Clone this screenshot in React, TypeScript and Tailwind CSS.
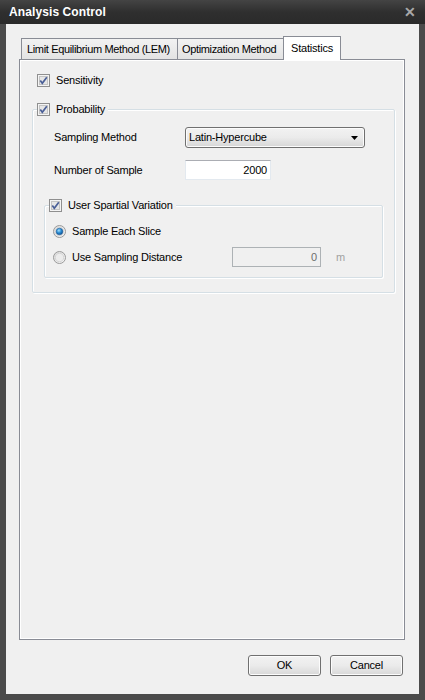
import React from "react";

const font = { fontFamily: '"Liberation Sans", Arial, sans-serif' };

function Check({ checked = true }: { checked?: boolean }) {
  return (
    <svg width="13" height="13" viewBox="0 0 13 13" className="shrink-0">
      <rect x="0.5" y="0.5" width="12" height="12" fill="#f4f4f4" stroke="#8f8f8f" />
      <rect x="2.5" y="2.5" width="8" height="8" fill="#e6e6e6" stroke="#c4c4c4" />
      {checked && (
        <path d="M3.3 6.4 L5.3 9.2 L9.8 3.2" fill="none" stroke="#4a5f97" strokeWidth="1.7" />
      )}
    </svg>
  );
}

function Radio({ checked }: { checked: boolean }) {
  return (
    <svg width="13" height="13" viewBox="0 0 13 13" className="shrink-0">
      <defs>
        <radialGradient id="rg" cx="0.4" cy="0.35" r="0.7">
          <stop offset="0" stopColor="#a6e0fb" />
          <stop offset="0.5" stopColor="#2a8dd4" />
          <stop offset="1" stopColor="#0d4a8a" />
        </radialGradient>
        <linearGradient id="rb" x1="0" y1="0" x2="1" y2="1">
          <stop offset="0" stopColor="#d8d8d8" />
          <stop offset="1" stopColor="#f8f8f8" />
        </linearGradient>
      </defs>
      <circle cx="6.5" cy="6.5" r="6" fill="url(#rb)" stroke="#9a9a9a" />
      <circle cx="6.5" cy="6.5" r="4.2" fill="#ececec" stroke="#cfcfcf" strokeWidth="0.8" />
      {checked && <circle cx="6.5" cy="6.5" r="3.3" fill="url(#rg)" stroke="#1c5c9b" strokeWidth="0.6" />}
    </svg>
  );
}

export default function App() {
  return (
    <div className="w-[425px] h-[700px] bg-[#4b4b4b] flex flex-col text-[11px] tracking-[-0.2px] text-black whitespace-nowrap" style={font}>
      {/* title bar */}
      <div className="h-[24px] shrink-0 bg-gradient-to-b from-[#444444] via-[#2f2f2f] to-[#2a2a2a] flex items-center justify-between pl-[9px] pr-[9px]">
        <span className="text-white font-bold text-[12px] tracking-[0.1px]">Analysis Control</span>
        <span className="text-[#a8a8a8] font-bold text-[14px] leading-none">✕</span>
      </div>
      {/* body */}
      <div className="flex-1 mx-[6px] mb-[6px] bg-[#f0f0f0] flex flex-col">
        {/* tabs */}
        <div className="flex items-end pl-[15px] pt-[12px] h-[35px] shrink-0">
          <div className="h-[21px] w-[157px] border border-b-0 border-[#898c95] bg-gradient-to-b from-[#f2f2f2] to-[#e3e3e3] flex items-center pl-[5px] tracking-[-0.35px]">
            Limit Equilibrium Method (LEM)
          </div>
          <div className="h-[21px] w-[106px] border border-b-0 border-l-0 border-[#898c95] bg-gradient-to-b from-[#f2f2f2] to-[#e3e3e3] flex items-center pl-[4px] tracking-[-0.35px]">
            Optimization Method
          </div>
          <div className="h-[24px] w-[58px] -ml-[1px] border border-b-0 border-[#898c95] bg-white flex items-start pt-[3px] pl-[7px] relative z-10 -mb-[1px]">
            Statistics
          </div>
        </div>
        {/* panel */}
        <div className="ml-[13px] w-[386px] h-[581px] border border-[#898c95] shadow-[inset_1px_1px_0_#ffffff,inset_-1px_-1px_0_#ffffff] pt-[14px] pl-[12px] pr-[9px]">
          <div className="flex items-center h-[13px] pl-[5px] gap-[6px]">
            <Check />
            <span>Sensitivity</span>
          </div>
          {/* probability group */}
          <div className="mt-[22px] h-[184px] border border-[#d5dfe5] rounded-[2px] shadow-[inset_1px_1px_0_#ffffff,1px_1px_0_#ffffff]">
            <div className="-mt-[7px] pl-[4px] flex">
              <div className="flex items-center gap-[6px] bg-[#f0f0f0] h-[13px] pr-[3px]">
                <Check />
                <span>Probability</span>
              </div>
            </div>
            <div className="flex items-center mt-[11px] h-[21px]">
              <span className="w-[152px] pl-[21px]">Sampling Method</span>
              <div className="w-[180px] h-[21px] rounded-[3px] border border-[#707070] bg-gradient-to-b from-[#f2f2f2] via-[#ebebeb] to-[#d6d6d6] flex items-center justify-between pl-[3px] pr-[6px] shadow-[inset_0_0_0_1px_#fcfcfc]">
                <span>Latin-Hypercube</span>
                <svg width="7" height="4" viewBox="0 0 7 4"><path d="M0 0 H7 L3.5 4 Z" fill="#000" /></svg>
              </div>
            </div>
            <div className="flex items-center mt-[12px] h-[20px]">
              <span className="w-[152px] pl-[21px]">Number of Sample</span>
              <div className="w-[86px] h-[20px] bg-white border border-[#e3e9ef] border-t-[#abadb3] flex items-center justify-end pr-[3px]">
                2000
              </div>
            </div>
            {/* inner group */}
            <div className="mx-[11px] mt-[25px] h-[73px] border border-[#d5dfe5] rounded-[2px] shadow-[inset_1px_1px_0_#ffffff,1px_1px_0_#ffffff]">
              <div className="-mt-[7px] pl-[4px] flex">
                <div className="flex items-center gap-[6px] bg-[#f0f0f0] h-[13px] pr-[3px]">
                  <Check />
                  <span>User Spartial Variation</span>
                </div>
              </div>
              <div className="flex items-center gap-[6px] pl-[8px] mt-[13px] h-[13px]">
                <Radio checked />
                <span>Sample Each Slice</span>
              </div>
              <div className="flex items-center pl-[8px] mt-[9px] h-[20px]">
                <div className="flex items-center gap-[6px] w-[179px]">
                  <Radio checked={false} />
                  <span>Use Sampling Distance</span>
                </div>
                <div className="w-[89px] h-[20px] border border-[#adb2b5] bg-[#f0f0f0] flex items-center justify-end pr-[3px] text-[#6d6d6d]">
                  0
                </div>
                <span className="ml-[15px] text-[#a0a0a0]">m</span>
              </div>
            </div>
          </div>
        </div>
        {/* buttons */}
        <div className="flex justify-end gap-[9px] pr-[16px] mt-[15px]">
          <div className="w-[73px] h-[21px] rounded-[3px] border border-[#707070] bg-gradient-to-b from-[#f2f2f2] via-[#ebebeb] to-[#d8d8d8] shadow-[inset_0_0_0_1px_#fcfcfc] flex items-center justify-center">
            OK
          </div>
          <div className="w-[73px] h-[21px] rounded-[3px] border border-[#707070] bg-gradient-to-b from-[#f2f2f2] via-[#ebebeb] to-[#d8d8d8] shadow-[inset_0_0_0_1px_#fcfcfc] flex items-center justify-center">
            Cancel
          </div>
        </div>
      </div>
    </div>
  );
}
